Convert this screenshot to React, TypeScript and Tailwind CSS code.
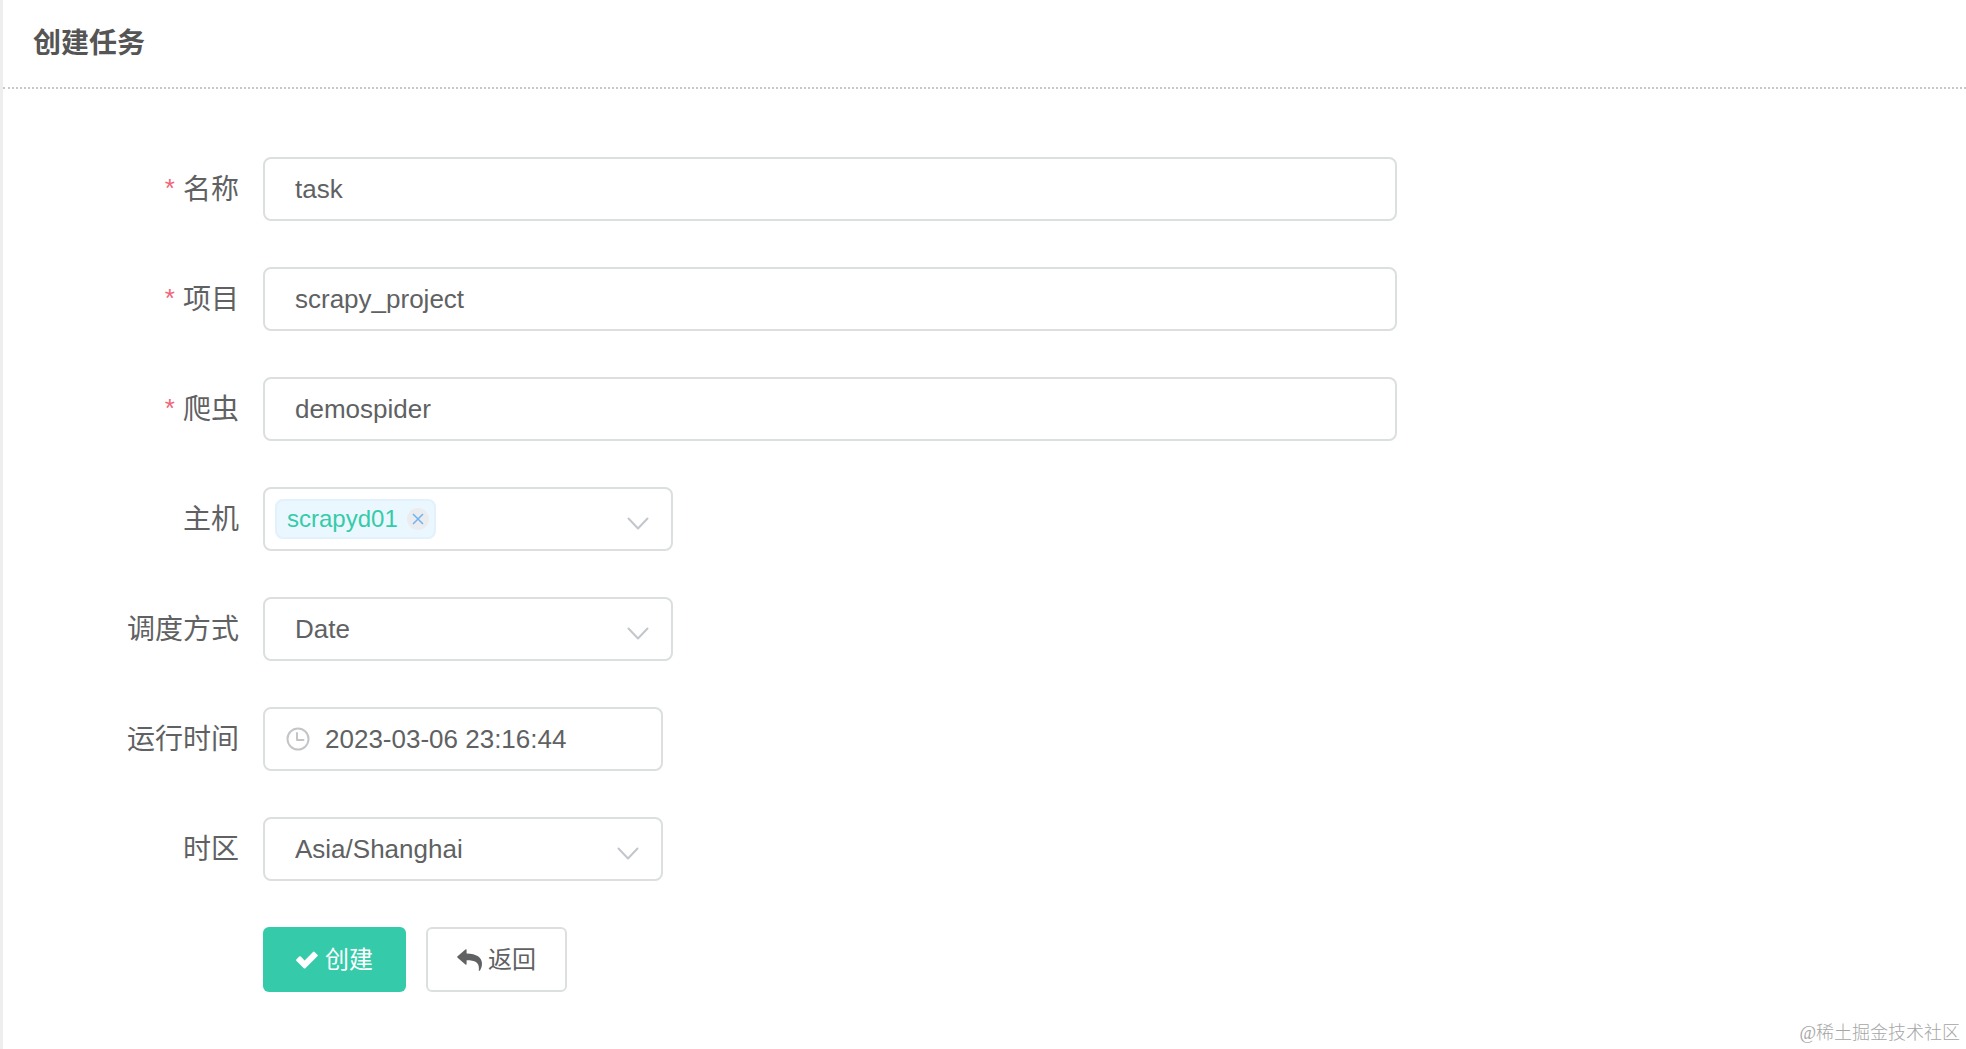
import { useState } from "react";
import type { ReactNode } from "react";

const controlClass =
  "h-16 w-full rounded-lg border-2 border-[#dcdfe0] bg-white text-[26px] text-[#606163] outline-none focus:border-[#35cbaa]";

function Chevron() {
  return (
    <svg
      viewBox="0 0 22 13"
      className="h-[13px] w-[22px] shrink-0"
      fill="none"
      stroke="#c3c6ca"
      strokeWidth="2"
      strokeLinecap="round"
      strokeLinejoin="round"
      aria-hidden="true"
    >
      <path d="M1.5 1.5 11 11.5 20.5 1.5" />
    </svg>
  );
}

function ClockIcon() {
  return (
    <svg viewBox="0 0 24 24" className="size-6" fill="none" stroke="#c3c6c9" strokeWidth="2" aria-hidden="true">
      <circle cx="12" cy="12" r="10.5" />
      <path d="M11 6V13H17.500" strokeLinecap="round" strokeLinejoin="round" />
    </svg>
  );
}

function CheckIcon() {
  return (
    <svg viewBox="0 0 22 18" className="h-[18px] w-[22px]" fill="currentColor" aria-hidden="true">
      <path d="M.5 8.2 3.2 5.5Q4 4.800 4.800 5.600L8.600 9.400 17 1Q17.800.2 18.600 1L21.400 3.700Q22.200 4.500 21.400 5.300L9.400 17.200Q8.600 18 7.800 17.200L.5 9.900Q-.3 9 .5 8.200Z" />
    </svg>
  );
}

function BackIcon() {
  return (
    <svg viewBox="0 0 26 22" className="h-[22px] w-[26px]" fill="currentColor" aria-hidden="true">
      <path d="M.6 7.300 8.400.6Q9.600-.2 9.600 1.200V4.400C19.500 4.500 25 8.500 25 14.500 25 17 24.300 19.400 23 21.400 22.500 22.100 21.600 21.800 21.800 21 22.600 14 19 11.200 9.600 11.200V14.800Q9.600 16.200 8.400 15.400L.6 8.700Q-.2 8 .6 7.300Z" />
    </svg>
  );
}

type RowProps = {
  id: string;
  label: string;
  required?: boolean;
  children: ReactNode;
};

function Row({ id, label, required, children }: RowProps) {
  return (
    <div className="flex items-center">
      <label
        htmlFor={id}
        className="flex w-[260px] shrink-0 items-center justify-end gap-2 pt-0.5 pr-6 text-[28px] leading-10 text-[#606163]"
      >
        {required && <span className="pb-1 text-[26px] text-[#ee6677]">*</span>}
        {label}
      </label>
      <div className="min-w-0 flex-1">{children}</div>
    </div>
  );
}

function TextRow({ id, label, initial }: { id: string; label: string; initial: string }) {
  return (
    <Row id={id} label={label} required>
      <input id={id} type="text" required defaultValue={initial} className={`${controlClass} px-[30px]`} />
    </Row>
  );
}

function SelectBox({ id, options }: { id: string; options: string[] }) {
  return (
    <div className="relative">
      <select id={id} className={`${controlClass} appearance-none px-[30px]`}>
        {options.map((option) => (
          <option key={option}>{option}</option>
        ))}
      </select>
      <span className="pointer-events-none absolute inset-y-0 right-6 flex items-center pt-2">
        <Chevron />
      </span>
    </div>
  );
}

function HostSelect({ id }: { id: string }) {
  const [hosts, setHosts] = useState(["scrapyd01"]);
  return (
    <div className={`${controlClass} flex items-center pr-[22px] pl-[10px]`}>
      {hosts.map((host) => (
        <span
          key={host}
          className="flex h-10 items-center gap-[9px] rounded-lg border-2 border-[#e2f1fc] bg-[#ebf7fe] pr-[5px] pl-[10px] text-2xl text-[#35cbaa]"
        >
          {host}
          <button
            type="button"
            aria-label={`移除 ${host}`}
            onClick={() => setHosts(hosts.filter((item) => item !== host))}
            className="flex size-[22px] items-center justify-center rounded-full bg-[#ebecef]"
          >
            <svg viewBox="0 0 12 12" className="size-3" stroke="#6fb3f0" strokeWidth="1.5" aria-hidden="true">
              <path d="M1 1 11 11M11 1 1 11" />
            </svg>
          </button>
        </span>
      ))}
      <button
        id={id}
        type="button"
        aria-haspopup="listbox"
        aria-label="主机"
        className="flex h-full flex-1 items-center justify-end pt-2"
      >
        <Chevron />
      </button>
    </div>
  );
}

export default function App() {
  return (
    <div className="flex min-h-screen flex-col border-l-[3px] border-[#eeeeee] bg-white font-['Liberation_Sans','Noto_Sans_CJK_SC',sans-serif]">
      <header className="border-b-2 border-dotted border-[#c8c8c8] px-[30px] pt-6 pb-[23px]">
        <h1 className="text-[28px] leading-10 font-bold text-[#555555]">创建任务</h1>
      </header>

      <form className="flex w-[71%] flex-col gap-[46px] pt-[68px]" onSubmit={(event) => event.preventDefault()}>
        <TextRow id="name" label="名称" initial="task" />
        <TextRow id="project" label="项目" initial="scrapy_project" />
        <TextRow id="spider" label="爬虫" initial="demospider" />
        <Row id="hosts" label="主机">
          <div className="max-w-[410px]">
            <HostSelect id="hosts" />
          </div>
        </Row>
        <Row id="trigger" label="调度方式">
          <div className="max-w-[410px]">
            <SelectBox id="trigger" options={["Date", "Interval", "Cron"]} />
          </div>
        </Row>
        <Row id="runtime" label="运行时间">
          <div className="relative max-w-[400px]">
            <input
              id="runtime"
              type="text"
              defaultValue="2023-03-06 23:16:44"
              className={`${controlClass} pr-[30px] pl-[60px]`}
            />
            <span className="pointer-events-none absolute inset-y-0 left-[23px] flex items-center">
              <ClockIcon />
            </span>
          </div>
        </Row>
        <Row id="timezone" label="时区">
          <div className="max-w-[400px]">
            <SelectBox id="timezone" options={["Asia/Shanghai", "UTC"]} />
          </div>
        </Row>
        <div className="flex gap-5 pl-[260px] text-2xl">
          <button
            type="submit"
            className="flex h-[65px] items-center gap-[7px] rounded-md bg-[#35cbaa] px-[33px] text-white"
          >
            <CheckIcon />
            创建
          </button>
          <button
            type="button"
            className="flex h-[65px] items-center gap-[5px] rounded-md border-2 border-[#dcdfe0] bg-white px-[29px] text-[#606163]"
          >
            <BackIcon />
            返回
          </button>
        </div>
      </form>

      <footer className="mt-auto pr-[6px] pb-1 text-right font-['Liberation_Serif','Noto_Sans_CJK_SC',serif] text-lg leading-6 font-light text-[#a6a6a6]">
        @稀土掘金技术社区
      </footer>
    </div>
  );
}
